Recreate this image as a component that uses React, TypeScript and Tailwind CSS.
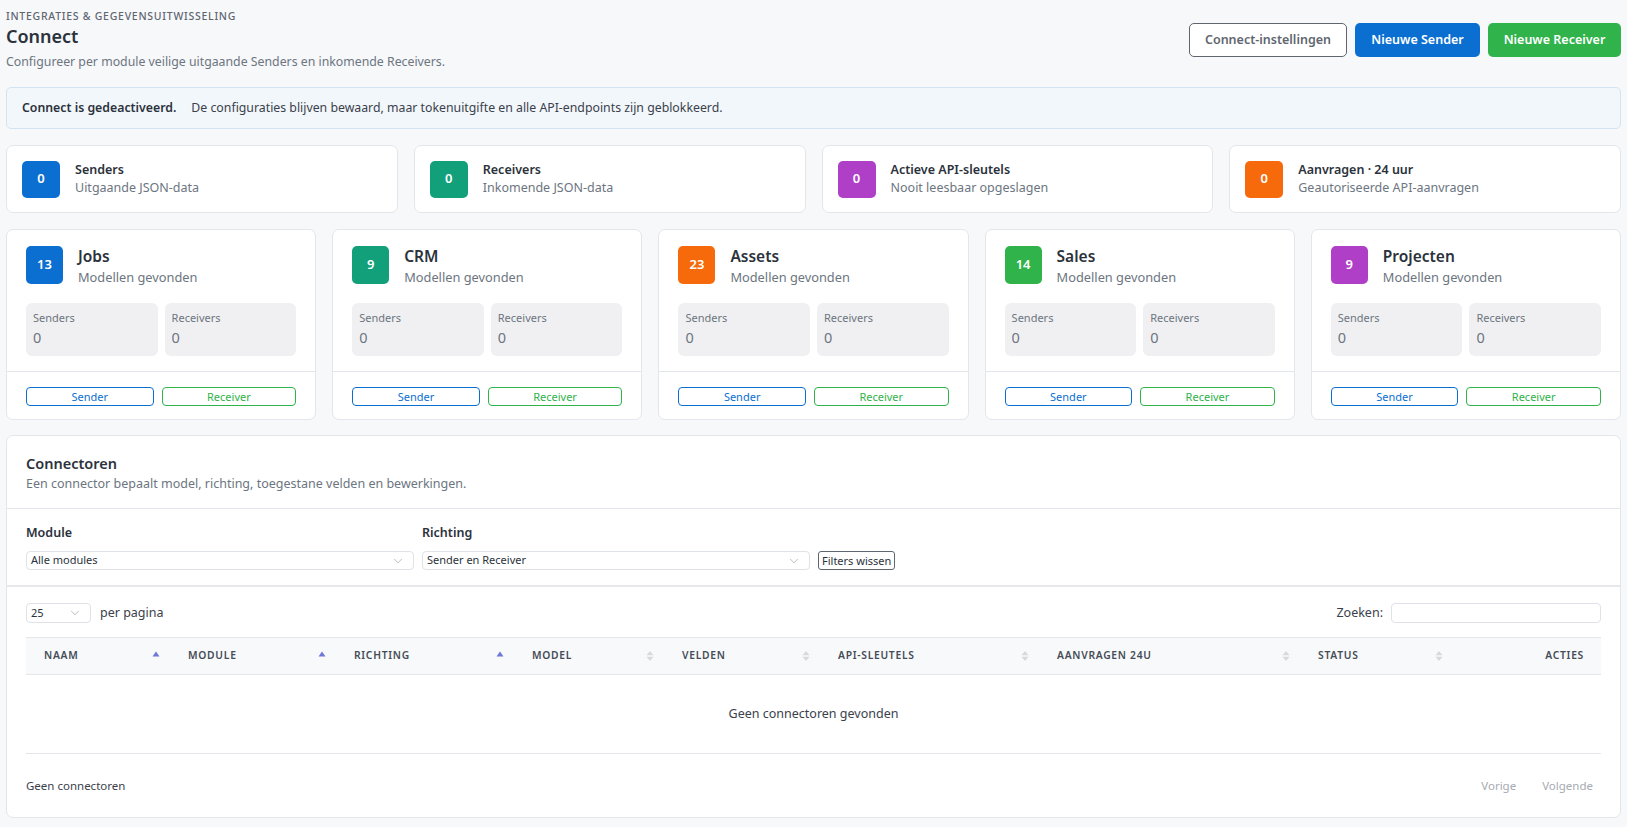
import { ChevronDown } from 'lucide-react';

const stats = [
  { value: '0', title: 'Senders', sub: 'Uitgaande JSON-data', color: 'bg-[#0b6fd2]' },
  { value: '0', title: 'Receivers', sub: 'Inkomende JSON-data', color: 'bg-[#12a07a]' },
  { value: '0', title: 'Actieve API-sleutels', sub: 'Nooit leesbaar opgeslagen', color: 'bg-[#b03fc8]' },
  { value: '0', title: 'Aanvragen · 24 uur', sub: 'Geautoriseerde API-aanvragen', color: 'bg-[#f76a0c]' },
];

const modules = [
  { count: '13', name: 'Jobs', color: 'bg-[#0b6fd2]' },
  { count: '9', name: 'CRM', color: 'bg-[#12a07a]' },
  { count: '23', name: 'Assets', color: 'bg-[#f76a0c]' },
  { count: '14', name: 'Sales', color: 'bg-[#2fb34a]' },
  { count: '9', name: 'Projecten', color: 'bg-[#b03fc8]' },
];

const columns = [
  { label: 'Naam', sort: 'up' },
  { label: 'Module', sort: 'up' },
  { label: 'Richting', sort: 'up' },
  { label: 'Model', sort: 'both' },
  { label: 'Velden', sort: 'both' },
  { label: 'API-sleutels', sort: 'both' },
  { label: 'Aanvragen 24u', sort: 'both' },
  { label: 'Status', sort: 'both' },
];

const SortIcon = ({ kind }: { kind: string }) => {
  if (kind === 'up') {
    return (
      <svg width="8" height="12" viewBox="0 0 8 12" className="shrink-0">
        <path d="M4 1.5 L7.5 6.5 L0.5 6.5 Z" fill="#6e78d6" />
      </svg>
    );
  }
  return (
    <svg width="8" height="12" viewBox="0 0 8 12" className="shrink-0">
      <path d="M4 1 L7.5 5.2 L0.5 5.2 Z" fill="#d6d9de" />
      <path d="M4 11 L7.5 6.8 L0.5 6.8 Z" fill="#d6d9de" />
    </svg>
  );
};

const Select = ({ label, className }: { label: string; className: string }) => (
  <div
    className={`flex items-center justify-between h-[19px] border border-[#dfe2e6] rounded-[4px] bg-white pl-[4px] pr-[8px] text-[11px] text-[#2b323b] ${className}`}
  >
    <span>{label}</span>
    <ChevronDown size={14} strokeWidth={1.2} className="text-[#9aa0a8]" />
  </div>
);

export default function App() {
  return (
    <div
      className="min-h-screen bg-[#f7f8fa] px-[6px] pt-[8px] pb-[9px] text-[#2b323b]"
      style={{ fontFamily: '"Noto Sans", "Open Sans", sans-serif' }}
    >
      {/* header */}
      <div className="flex items-start justify-between">
        <div>
          <div className="text-[10.5px] leading-[16px] font-medium uppercase tracking-[0.07em] text-[#5f6670]">
            Integraties &amp; gegevensuitwisseling
          </div>
          <h1 className="text-[18px] leading-[24px] font-semibold text-[#2b323b]">Connect</h1>
          <p className="mt-[4px] text-[12.3px] leading-[20px] text-[#6c7580]">
            Configureer per module veilige uitgaande Senders en inkomende Receivers.
          </p>
        </div>
        <div className="mt-[15px] flex gap-[8px]">
          <button className="h-[34px] w-[158px] rounded-[5px] border border-[#5f6670] bg-white text-[12.5px] font-semibold text-[#5f6670]">
            Connect-instellingen
          </button>
          <button className="h-[34px] w-[125px] rounded-[5px] bg-[#0b6fd2] text-[12.5px] font-semibold text-white">
            Nieuwe Sender
          </button>
          <button className="h-[34px] w-[133px] rounded-[5px] bg-[#2fb34a] text-[12.5px] font-semibold text-white">
            Nieuwe Receiver
          </button>
        </div>
      </div>

      {/* alert */}
      <div className="mt-[15px] flex h-[42px] items-center rounded-[5px] border border-[#d3e3f3] bg-[#f2f7fc] px-[15px] text-[12.3px]">
        <span className="font-semibold text-[#2b323b]">Connect is gedeactiveerd.</span>
        <span className="ml-[15px] text-[#3a414b]">
          De configuraties blijven bewaard, maar tokenuitgifte en alle API-endpoints zijn geblokkeerd.
        </span>
      </div>

      {/* stats */}
      <div className="mt-[16px] grid grid-cols-4 gap-[16px]">
        {stats.map((s) => (
          <div
            key={s.title}
            className="flex h-[68px] items-center gap-[15px] rounded-[7px] border border-[#e3e6ea] bg-white px-[15px]"
          >
            <div
              className={`${s.color} flex h-[37px] w-[38px] items-center justify-center rounded-[5px] text-[13px] font-semibold text-white`}
            >
              {s.value}
            </div>
            <div className="flex flex-col">
              <span className="text-[12.5px] leading-[18px] font-semibold text-[#2b323b]">{s.title}</span>
              <span className="text-[12.5px] leading-[18px] text-[#6c7580]">{s.sub}</span>
            </div>
          </div>
        ))}
      </div>

      {/* modules */}
      <div className="mt-[16px] grid grid-cols-5 gap-[16px]">
        {modules.map((m) => (
          <div key={m.name} className="flex h-[191px] flex-col rounded-[7px] border border-[#e3e6ea] bg-white">
            <div className="px-[19px] pt-[16px] pb-[15px]">
              <div className="flex items-start gap-[15px]">
                <div
                  className={`${m.color} flex h-[38px] w-[37px] items-center justify-center rounded-[5px] text-[13px] font-semibold text-white`}
                >
                  {m.count}
                </div>
                <div className="flex flex-col">
                  <span className="text-[15.5px] leading-[21px] font-semibold text-[#2b323b]">{m.name}</span>
                  <span className="text-[12.8px] leading-[20px] text-[#6c7580]">Modellen gevonden</span>
                </div>
              </div>
              <div className="mt-[16px] grid grid-cols-2 gap-[7px]">
                {['Senders', 'Receivers'].map((l) => (
                  <div key={l} className="h-[53px] rounded-[6px] bg-[#f0f0f2] px-[7px] pt-[6px]">
                    <div className="text-[11px] leading-[18px] text-[#6c7580]">{l}</div>
                    <div className="text-[14.5px] leading-[20px] text-[#6c7580]">0</div>
                  </div>
                ))}
              </div>
            </div>
            <div className="flex gap-[8px] border-t border-[#e3e6ea] px-[19px] pt-[15px]">
              <button className="h-[19px] flex-auto rounded-[4px] border border-[#0b6fd2] bg-white text-[11px] leading-[17px] text-[#0b6fd2]">
                Sender
              </button>
              <button className="h-[19px] flex-auto rounded-[4px] border border-[#2fb34a] bg-white text-[11px] leading-[17px] text-[#2fb34a]">
                Receiver
              </button>
            </div>
          </div>
        ))}
      </div>

      {/* connectoren */}
      <div className="mt-[15px] rounded-[7px] border border-[#e3e6ea] bg-white">
        <div className="border-b border-[#e3e6ea] px-[19px] pt-[16px] pb-[14px]">
          <h2 className="text-[14.5px] leading-[22px] font-semibold text-[#2b323b]">Connectoren</h2>
          <p className="text-[12.5px] leading-[20px] text-[#6c7580]">
            Een connector bepaalt model, richting, toegestane velden en bewerkingen.
          </p>
        </div>

        <div className="border-b-2 border-[#e6e8eb] px-[19px] pt-[14px] pb-[15px]">
          <div className="flex items-end gap-[8px]">
            <div className="flex flex-col">
              <span className="text-[12.5px] leading-[20px] font-semibold text-[#2b323b]">Module</span>
              <Select label="Alle modules" className="mt-[8px] w-[388px]" />
            </div>
            <div className="flex flex-col">
              <span className="text-[12.5px] leading-[20px] font-semibold text-[#2b323b]">Richting</span>
              <Select label="Sender en Receiver" className="mt-[8px] w-[388px]" />
            </div>
            <button className="h-[19px] rounded-[3px] border border-[#5f6670] bg-white px-[3px] text-[11px] leading-[17px] text-[#2b323b]">
              Filters wissen
            </button>
          </div>
        </div>

        <div className="px-[19px] pt-[16px]">
          <div className="flex items-center justify-between">
            <div className="flex items-center gap-[9px]">
              <Select label="25" className="w-[65px] h-[20px]" />
              <span className="text-[12.5px] text-[#3a414b]">per pagina</span>
            </div>
            <div className="flex items-center gap-[8px]">
              <span className="text-[12.5px] text-[#3a414b]">Zoeken:</span>
              <div className="h-[20px] w-[210px] rounded-[4px] border border-[#dfe2e6] bg-white" />
            </div>
          </div>

          <div className="mt-[14px] grid h-[38px] grid-cols-[144px_166px_178px_150px_156px_219px_261px_153px_1fr] items-center border-y border-[#e3e6ea] bg-[#f8f9fb] text-[10.3px] font-semibold uppercase tracking-[0.07em] text-[#454c56]">
            {columns.map((c) => (
              <div key={c.label} className="flex items-center justify-between pl-[18px] pr-[10px]">
                <span>{c.label}</span>
                <SortIcon kind={c.sort} />
              </div>
            ))}
            <div className="pr-[17px] text-right">Acties</div>
          </div>

          <div className="flex h-[79px] items-center justify-center border-b border-[#e3e6ea] text-[12.5px] text-[#3a414b]">
            Geen connectoren gevonden
          </div>

          <div className="flex h-[63px] items-center justify-between">
            <span className="text-[11.5px] text-[#3a414b]">Geen connectoren</span>
            <div className="flex gap-[26px] pr-[8px] text-[11.5px] text-[#a6abb2]">
              <span>Vorige</span>
              <span>Volgende</span>
            </div>
          </div>
        </div>
      </div>
    </div>
  );
}
